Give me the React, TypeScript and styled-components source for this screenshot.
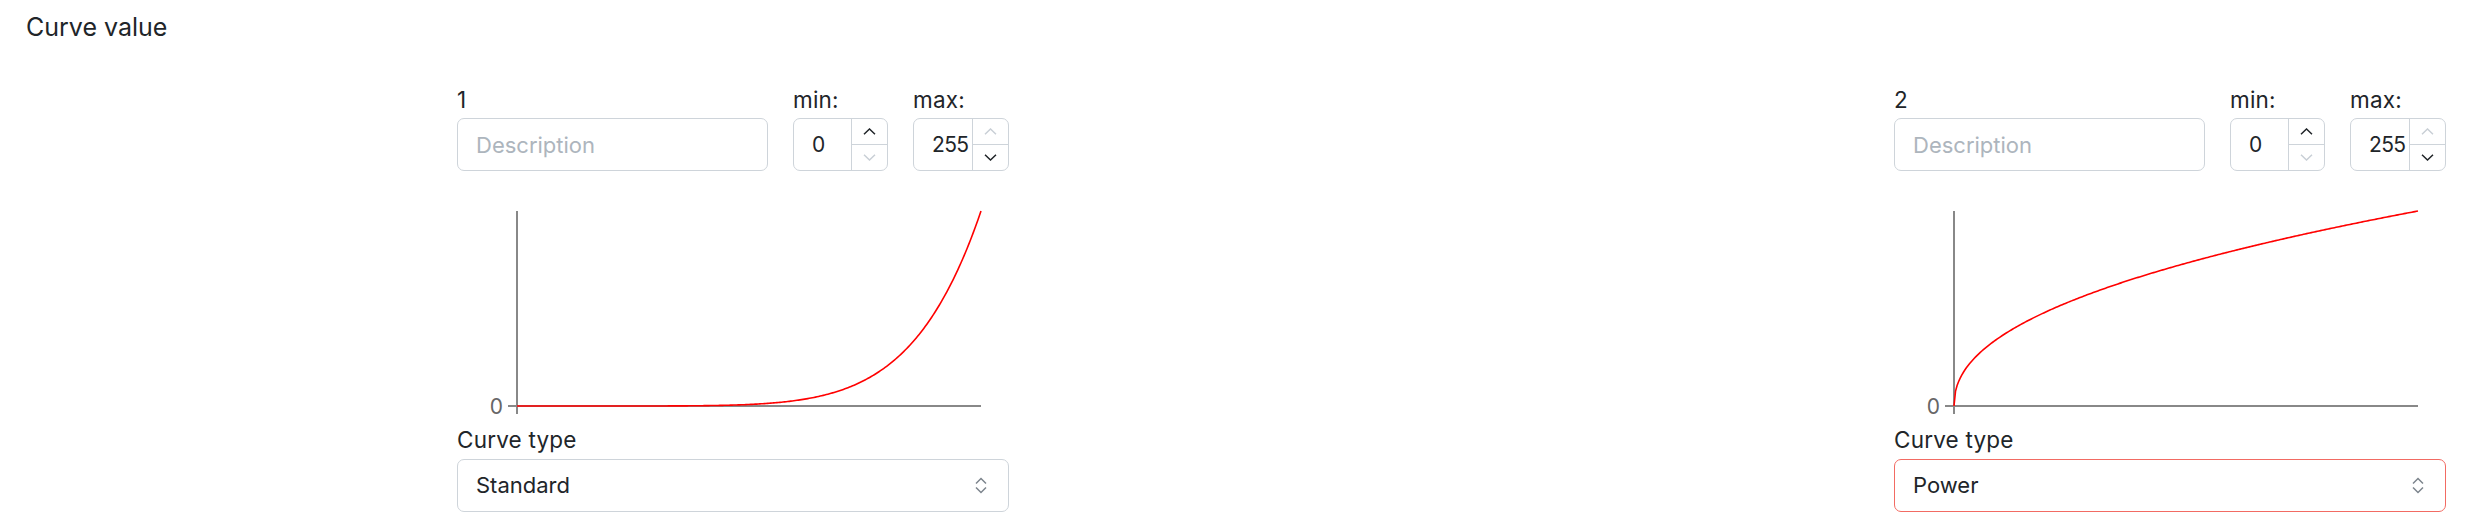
import styled, { createGlobalStyle } from "styled-components";

const GlobalStyle = createGlobalStyle`
  body {
    margin: 0;
    background: #ffffff;
    font-family: Inter, "Noto Sans", sans-serif;
    color: #212529;
  }
`;

const Page = styled.div`
  padding: 12px 27px 0 26px;
`;

const Title = styled.h2`
  margin: 0;
  font-size: 25px;
  font-weight: 400;
  line-height: 1.2;
`;

const Panels = styled.div`
  display: flex;
  gap: 885px;
  padding-left: 431px;
  margin-top: 45px;
`;

const Panel = styled.div`
  width: 552px;
  display: flex;
  flex-direction: column;
`;

const TopRow = styled.div`
  display: flex;
  gap: 25px;
`;

const Field = styled.div<{ $w: number }>`
  width: ${(p) => p.$w}px;
  display: flex;
  flex-direction: column;
  gap: 5px;
`;

const Label = styled.label`
  font-size: 22.5px;
  line-height: 26.4px;
  letter-spacing: 0.2px;
`;

const TextInput = styled.input`
  height: 53px;
  box-sizing: border-box;
  border: 1px solid #ced4da;
  border-radius: 7px;
  padding: 0 18px;
  font: inherit;
  font-size: 22px;
  color: #212529;
  outline: none;
  &::placeholder {
    color: #adb5bd;
  }
`;

const Spin = styled.div`
  height: 53px;
  box-sizing: border-box;
  border: 1px solid #ced4da;
  border-radius: 7px;
  display: flex;
  overflow: hidden;
`;

const SpinValue = styled.div`
  flex: 1;
  display: flex;
  align-items: center;
  padding-left: 18px;
  font-size: 21px;
  letter-spacing: -0.6px;
`;

const SpinButtons = styled.div`
  width: 35px;
  border-left: 1px solid #ced4da;
  display: flex;
  flex-direction: column;
`;

const SpinButton = styled.button<{ $off?: boolean }>`
  flex: 1;
  border: 0;
  background: none;
  padding: 0;
  display: flex;
  align-items: center;
  justify-content: center;
  color: ${(p) => (p.$off ? "#c9cfd6" : "#212529")};
  & + & {
    border-top: 1px solid #ced4da;
  }
`;

const ChartSvg = styled.svg`
  display: block;
`;

const SelectBox = styled.div<{ $invalid?: boolean }>`
  margin-top: 5px;
  height: 53px;
  box-sizing: border-box;
  border: 1px solid ${(p) => (p.$invalid ? "#f26b63" : "#ced4da")};
  border-radius: 7px;
  padding: 0 21px 0 18px;
  display: flex;
  align-items: center;
  justify-content: space-between;
  font-size: 22px;
  color: #212529;
`;

const Chevron = ({ up }: { up?: boolean }) => (
  <svg width="13" height="7" viewBox="0 0 13 7" fill="none">
    <path
      d={up ? "M1 6.2 L6.5 1 L12 6.2" : "M1 0.8 L6.5 6 L12 0.8"}
      stroke="currentColor"
      strokeWidth="1.5"
    />
  </svg>
);

const UpDown = () => (
  <svg width="12" height="17" viewBox="0 0 12 17" fill="none">
    <path d="M1 6.5 L6 1.5 L11 6.5 M1 10.5 L6 15.5 L11 10.5" stroke="#7d858d" strokeWidth="1.5" />
  </svg>
);

function NumberBox({ value, atMin, atMax }: { value: number; atMin?: boolean; atMax?: boolean }) {
  return (
    <Spin>
      <SpinValue>{value}</SpinValue>
      <SpinButtons>
        <SpinButton $off={atMax}>
          <Chevron up />
        </SpinButton>
        <SpinButton $off={atMin}>
          <Chevron />
        </SpinButton>
      </SpinButtons>
    </Spin>
  );
}

function Chart({ fn }: { fn: (t: number) => number }) {
  const x0 = 60,
    x1 = 524,
    y0 = 235,
    y1 = 40;
  const pts = Array.from({ length: 301 }, (_, i) => {
    const t = i / 300;
    return `${(x0 + t * (x1 - x0)).toFixed(2)},${(y0 - fn(t) * (y0 - y1)).toFixed(2)}`;
  }).join(" ");
  return (
    <ChartSvg width={552} height={256}>
      <line x1={x0} y1={y1} x2={x0} y2={243} stroke="#888" strokeWidth="2" />
      <line x1={51} y1={y0} x2={x1} y2={y0} stroke="#888" strokeWidth="2" />
      <text x={46} y={243} textAnchor="end" fontSize="21" fill="#666" fontFamily="Inter, sans-serif">
        0
      </text>
      <polyline points={pts} fill="none" stroke="#ff0000" strokeWidth="1.6" />
    </ChartSvg>
  );
}

interface CurveConf {
  id: number;
  type: string;
  fn: (t: number) => number;
  invalid?: boolean;
}

const curves: CurveConf[] = [
  { id: 1, type: "Standard", fn: (t) => Math.pow(t, 7) },
  { id: 2, type: "Power", fn: (t) => Math.pow(t, 0.45), invalid: true },
];

export default function App() {
  return (
    <Page>
      <GlobalStyle />
      <Title>Curve value</Title>
      <Panels>
        {curves.map((c) => (
          <Panel key={c.id}>
            <TopRow>
              <Field $w={311}>
                <Label>{c.id}</Label>
                <TextInput placeholder="Description" />
              </Field>
              <Field $w={95}>
                <Label>min:</Label>
                <NumberBox value={0} atMin />
              </Field>
              <Field $w={96}>
                <Label>max:</Label>
                <NumberBox value={255} atMax />
              </Field>
            </TopRow>
            <Chart fn={c.fn} />
            <Label>Curve type</Label>
            <SelectBox $invalid={c.invalid}>
              <span>{c.type}</span>
              <UpDown />
            </SelectBox>
          </Panel>
        ))}
      </Panels>
    </Page>
  );
}
